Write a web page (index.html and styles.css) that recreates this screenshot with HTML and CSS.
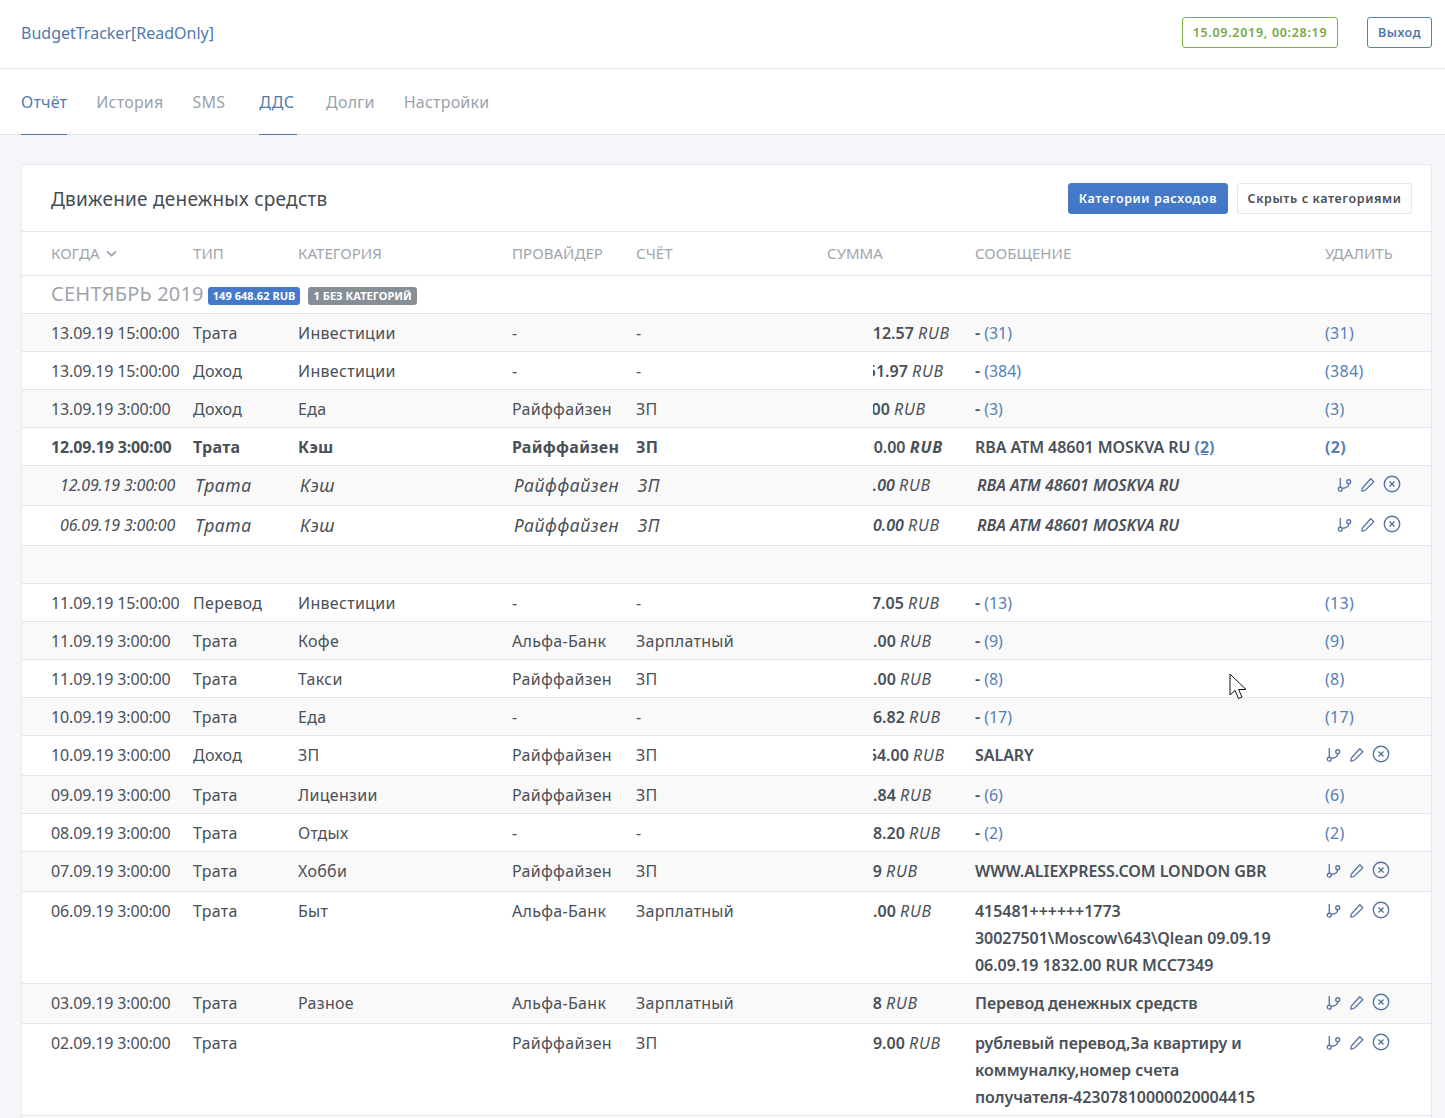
FILE: index.html
```html
<!DOCTYPE html>
<html lang="ru">
<head>
<meta charset="utf-8">
<title>BudgetTracker</title>
<link rel="stylesheet" href="styles.css">
</head>
<body>
<svg class="defs" width="0" height="0" aria-hidden="true">
  <symbol id="i-branch" viewBox="0 0 16 16"><circle cx="3.500" cy="13" r="2.100"/><circle cx="12.500" cy="5" r="2.100"/><path d="M3.500 10.900V1M12.500 7.100c0 3-3 4.500-7 5"/></symbol>
  <symbol id="i-pencil" viewBox="0 0 16 16"><path d="M11.500 1.800l3.200 3.200-8.700 8.700c-.4.4-3.200 1.200-4 1.200 0-.8.8-3.600 1.200-4z"/></symbol>
  <symbol id="i-x" viewBox="0 0 18 18"><circle cx="9" cy="9" r="7.700"/><path d="M6.500 6.500l5 5M11.500 6.500l-5 5"/></symbol>
</svg>
<header class="topbar">
  <a class="brand" href="#">BudgetTracker[ReadOnly]</a>
  <div class="topbar-right">
    <span class="clock">15.09.2019, 00:28:19</span>
    <a class="logout" href="#">Выход</a>
  </div>
</header>
<nav class="tabs">
  <a class="tab active" href="#">Отчёт</a>
  <a class="tab" href="#">История</a>
  <a class="tab" href="#">SMS</a>
  <a class="tab active wide" href="#">ДДС</a>
  <a class="tab" href="#">Долги</a>
  <a class="tab" href="#">Настройки</a>
</nav>
<main class="content">
  <section class="card">
    <div class="card-head">
      <h1 class="card-title">Движение денежных средств</h1>
      <div class="card-actions">
        <button class="btn primary">Категории расходов</button>
        <button class="btn plain">Скрыть с категориями</button>
      </div>
    </div>
    <table class="grid">
      <colgroup>
        <col class="c1"><col class="c2"><col class="c3"><col class="c4"><col class="c5"><col class="c6"><col class="c7"><col class="c8">
      </colgroup>
      <thead>
        <tr>
          <th>Когда <svg class="chev" viewBox="0 0 10 6" width="11" height="7"><path d="M1 1l4 4 4-4"/></svg></th>
          <th>Тип</th><th>Категория</th><th>Провайдер</th><th>Счёт</th><th>Сумма</th><th>Сообщение</th><th>Удалить</th>
        </tr>
      </thead>
      <tbody>
        <tr class="month"><td colspan="8"><div class="month-line"><span class="month-name">Сентябрь 2019</span><span class="pill blue">149 648.62 RUB</span><span class="pill gray">1 без категорий</span></div></td></tr>

        <tr class="odd"><td>13.09.19 15:00:00</td><td>Трата</td><td>Инвестиции</td><td>-</td><td>-</td><td><span class="amt" style="width:77px"><b>112.57</b>&nbsp;<i>RUB</i></span></td><td class="msg">- <a href="#">(31)</a></td><td><a href="#">(31)</a></td></tr>
        <tr><td>13.09.19 15:00:00</td><td>Доход</td><td>Инвестиции</td><td>-</td><td>-</td><td><span class="amt" style="width:71px"><b>551.97</b>&nbsp;<i>RUB</i></span></td><td class="msg">- <a href="#">(384)</a></td><td><a href="#">(384)</a></td></tr>
        <tr class="odd"><td>13.09.19 3:00:00</td><td>Доход</td><td>Еда</td><td>Райффайзен</td><td>ЗП</td><td><span class="amt" style="width:53px"><b>00.00</b>&nbsp;<i>RUB</i></span></td><td class="msg">- <a href="#">(3)</a></td><td><a href="#">(3)</a></td></tr>
        <tr class="bold"><td>12.09.19 3:00:00</td><td>Трата</td><td>Кэш</td><td>Райффайзен</td><td>ЗП</td><td><span class="amt" style="width:70px"><b>100.00</b>&nbsp;<i>RUB</i></span></td><td class="msg">RBA ATM 48601 MOSKVA RU <a class="u" href="#">(2)</a></td><td><a href="#">(2)</a></td></tr>
        <tr class="odd sub">
          <td><span class="s-date">12.09.19 3:00:00</span></td><td><span class="s-type">Трата</span></td><td><span class="s-cat">Кэш</span></td><td><span class="s-prov">Райффайзен</span></td><td><span class="s-acc">ЗП</span></td><td><span class="amt" style="width:58px"><b>0.00</b>&nbsp;<span>RUB</span></span></td><td class="msg"><span class="s-msg">RBA ATM 48601 MOSKVA RU</span></td>
          <td><span class="icons sub-icons"><svg class="ic"><use href="#i-branch"/></svg><svg class="ic"><use href="#i-pencil"/></svg><svg class="ic lg"><use href="#i-x"/></svg></span></td>
        </tr>
        <tr class="sub">
          <td><span class="s-date">06.09.19 3:00:00</span></td><td><span class="s-type">Трата</span></td><td><span class="s-cat">Кэш</span></td><td><span class="s-prov">Райффайзен</span></td><td><span class="s-acc">ЗП</span></td><td><span class="amt" style="width:67px"><b>100.00</b>&nbsp;<span>RUB</span></span></td><td class="msg"><span class="s-msg">RBA ATM 48601 MOSKVA RU</span></td>
          <td><span class="icons sub-icons"><svg class="ic"><use href="#i-branch"/></svg><svg class="ic"><use href="#i-pencil"/></svg><svg class="ic lg"><use href="#i-x"/></svg></span></td>
        </tr>
        <tr class="odd"><td colspan="8">&nbsp;</td></tr>
        <tr><td>11.09.19 15:00:00</td><td>Перевод</td><td>Инвестиции</td><td>-</td><td>-</td><td><span class="amt" style="width:67px"><b>157.05</b>&nbsp;<i>RUB</i></span></td><td class="msg">- <a href="#">(13)</a></td><td><a href="#">(13)</a></td></tr>
        <tr class="odd"><td>11.09.19 3:00:00</td><td>Трата</td><td>Кофе</td><td>Альфа-Банк</td><td>Зарплатный</td><td><span class="amt" style="width:59px"><b>0.00</b>&nbsp;<i>RUB</i></span></td><td class="msg">- <a href="#">(9)</a></td><td><a href="#">(9)</a></td></tr>
        <tr><td>11.09.19 3:00:00</td><td>Трата</td><td>Такси</td><td>Райффайзен</td><td>ЗП</td><td><span class="amt" style="width:59px"><b>0.00</b>&nbsp;<i>RUB</i></span></td><td class="msg">- <a href="#">(8)</a></td><td><a href="#">(8)</a></td></tr>
        <tr class="odd"><td>10.09.19 3:00:00</td><td>Трата</td><td>Еда</td><td>-</td><td>-</td><td><span class="amt" style="width:68px"><b>116.82</b>&nbsp;<i>RUB</i></span></td><td class="msg">- <a href="#">(17)</a></td><td><a href="#">(17)</a></td></tr>
        <tr class="tall"><td>10.09.19 3:00:00</td><td>Доход</td><td>ЗП</td><td>Райффайзен</td><td>ЗП</td><td><span class="amt" style="width:72px"><b>564.00</b>&nbsp;<i>RUB</i></span></td><td class="msg">SALARY</td>
          <td><span class="icons"><svg class="ic"><use href="#i-branch"/></svg><svg class="ic"><use href="#i-pencil"/></svg><svg class="ic lg"><use href="#i-x"/></svg></span></td></tr>
        <tr class="odd"><td>09.09.19 3:00:00</td><td>Трата</td><td>Лицензии</td><td>Райффайзен</td><td>ЗП</td><td><span class="amt" style="width:59px"><b>0.84</b>&nbsp;<i>RUB</i></span></td><td class="msg">- <a href="#">(6)</a></td><td><a href="#">(6)</a></td></tr>
        <tr><td>08.09.19 3:00:00</td><td>Трата</td><td>Отдых</td><td>-</td><td>-</td><td><span class="amt" style="width:68px"><b>118.20</b>&nbsp;<i>RUB</i></span></td><td class="msg">- <a href="#">(2)</a></td><td><a href="#">(2)</a></td></tr>
        <tr class="odd tall"><td>07.09.19 3:00:00</td><td>Трата</td><td>Хобби</td><td>Райффайзен</td><td>ЗП</td><td><span class="amt" style="width:45px"><b>99</b>&nbsp;<i>RUB</i></span></td><td class="msg">WWW.ALIEXPRESS.COM LONDON GBR</td>
          <td><span class="icons"><svg class="ic"><use href="#i-branch"/></svg><svg class="ic"><use href="#i-pencil"/></svg><svg class="ic lg"><use href="#i-x"/></svg></span></td></tr>
        <tr><td>06.09.19 3:00:00</td><td>Трата</td><td>Быт</td><td>Альфа-Банк</td><td>Зарплатный</td><td><span class="amt" style="width:59px"><b>0.00</b>&nbsp;<i>RUB</i></span></td><td class="msg">415481++++++1773<br>30027501\Moscow\643\Qlean 09.09.19<br>06.09.19 1832.00 RUR MCC7349</td>
          <td><span class="icons"><svg class="ic"><use href="#i-branch"/></svg><svg class="ic"><use href="#i-pencil"/></svg><svg class="ic lg"><use href="#i-x"/></svg></span></td></tr>
        <tr class="odd tall"><td>03.09.19 3:00:00</td><td>Трата</td><td>Разное</td><td>Альфа-Банк</td><td>Зарплатный</td><td><span class="amt" style="width:45px"><b>88</b>&nbsp;<i>RUB</i></span></td><td class="msg">Перевод денежных средств</td>
          <td><span class="icons"><svg class="ic"><use href="#i-branch"/></svg><svg class="ic"><use href="#i-pencil"/></svg><svg class="ic lg"><use href="#i-x"/></svg></span></td></tr>
        <tr><td>02.09.19 3:00:00</td><td>Трата</td><td></td><td>Райффайзен</td><td>ЗП</td><td><span class="amt" style="width:68px"><b>119.00</b>&nbsp;<i>RUB</i></span></td><td class="msg">рублевый перевод,За квартиру и<br>коммуналку,номер счета<br>получателя-42307810000020004415</td>
          <td><span class="icons"><svg class="ic"><use href="#i-branch"/></svg><svg class="ic"><use href="#i-pencil"/></svg><svg class="ic lg"><use href="#i-x"/></svg></span></td></tr>
        <tr class="odd"><td colspan="8">&nbsp;</td></tr>
      </tbody>
    </table>
  </section>
</main>
<svg class="cursor" width="19" height="28" viewBox="0 0 19 28" aria-hidden="true"><path d="M1 1v21l5-4.500 3.500 8 3.500-1.500-3.500-7.500H17z"/></svg>
</body>
</html>
```
FILE: styles.css
```css
html, body { margin: 0; padding: 0; height: 1118px; overflow: hidden; }
body { background: #f4f6f9; color: #495057; font-family: "Noto Sans", "Liberation Sans", sans-serif; font-size: 16px; position: relative; }
a { color: #5580b6; text-decoration: none; }
.defs { position: absolute; }

.topbar { height: 68px; background: #fff; border-bottom: 1px solid #e3e6ea; display: flex; align-items: center; justify-content: space-between; padding: 0 13px 0 21px; }
.brand { font-size: 16px; color: #4f79ad; position: relative; top: -1px; }
.topbar-right { display: flex; align-items: flex-start; gap: 29px; padding-bottom: 4px; }
.clock { width: 156px; height: 31px; box-sizing: border-box; border: 1px solid #78b13f; border-radius: 3px; color: #78a83f; font-size: 12.500px; font-weight: 600; display: flex; align-items: center; justify-content: center; letter-spacing: .7px; }
.logout { width: 65px; height: 31px; box-sizing: border-box; border: 1px solid #5a80ad; border-radius: 3px; color: #4f76a8; font-size: 12.500px; font-weight: 600; display: flex; align-items: center; justify-content: center; letter-spacing: .5px; }

.tabs { height: 65px; background: #fff; border-bottom: 1px solid #e3e6ea; display: flex; padding-left: 21px; gap: 29px; }
.tab { color: #9aa2ad; font-size: 16px; letter-spacing: .22px; line-height: 66px; height: 66px; box-sizing: border-box; }
.tab.active { color: #4f7bb3; border-bottom: 1px solid #4f7bb3; }
.tab.wide { padding-right: 3px; margin-left: 5px; }

.content { padding: 29px 13px 0 21px; }
.card { background: #fff; border: 1px solid #e6e9ed; border-bottom: 0; border-radius: 3px 3px 0 0; }
.card-head { height: 66px; display: flex; align-items: center; justify-content: space-between; padding: 0 19px 0 29px; border-bottom: 1px solid #e3e6ea; }
.card-title { margin: 0; font-size: 19px; font-weight: 400; letter-spacing: .25px; color: #454c53; position: relative; top: 1px; }
.card-actions { display: flex; gap: 9px; }
.btn { height: 31px; box-sizing: border-box; border-radius: 3px; font-family: inherit; font-size: 12.500px; font-weight: 600; letter-spacing: .6px; padding: 0; }
.btn.primary { width: 160px; background: #4479c9; border: 1px solid #4479c9; color: #fff; }
.btn.plain { width: 175px; background: #fff; border: 1px solid #e3e6ea; color: #4a5056; }

.grid { width: 100%; table-layout: fixed; border-collapse: collapse; }
.c1 { width: 171px; } .c2 { width: 105px; } .c3 { width: 214px; } .c4 { width: 124px; }
.c5 { width: 191px; } .c6 { width: 148px; } .c7 { width: 350px; } .c8 { width: 106px; }
.grid th { height: 41px; padding: 0 0 2px; text-align: left; font-size: 15px; font-weight: 400; letter-spacing: .05px; text-transform: uppercase; color: #a0a5ab; border-bottom: 1px solid #e3e6ea; }
.grid th:first-child, .grid td:first-child { padding-left: 29px; }
.chev { fill: none; stroke: #9aa0a6; stroke-width: 1.500; vertical-align: 2px; margin-left: 3px; }
.grid td { padding: 6px 0 4px; line-height: 27px; vertical-align: top; border-bottom: 1px solid #e3e6ea; white-space: nowrap; letter-spacing: .3px; }
.grid td:first-child { letter-spacing: -.15px; }
.grid td.msg { letter-spacing: -.05px; }
.odd td { background: #f9f9f9; }
.grid .month td { padding: 4px 0 5px 29px; letter-spacing: 0; }
.month-line { display: flex; align-items: center; height: 28px; }
.month-name { font-size: 20px; line-height: 28px; color: #a0a5ab; text-transform: uppercase; letter-spacing: .2px; margin-right: 4px; }
.pill { height: 18px; line-height: 18px; padding: 0 5px; margin-right: 8px; margin-top: 3px; border-radius: 3px; color: #fff; font-size: 11.100px; font-weight: 700; text-transform: uppercase; }
.pill.blue { background: #4479c9; }
.pill.gray { background: #868e96; }

.amt { display: flex; justify-content: flex-end; overflow: hidden; white-space: nowrap; margin-left: 46px; letter-spacing: 0; }
.amt b { font-weight: 600; flex: none; }
.amt i, .amt span { flex: none; letter-spacing: .8px; }
.msg { font-weight: 600; }
.msg a { font-weight: 400; }
.bold td { font-weight: 700; }
.bold .msg { font-weight: 600; }
.bold .msg a, .bold a { font-weight: 700; }
.bold .amt i { font-weight: 700; }
.u { text-decoration: underline; }
.tall td { padding-bottom: 6px; }

.sub td { padding: 6px 0 5px; font-style: italic; }
.s-date { padding-left: 9px; }
.s-type, .s-prov, .s-cat, .s-acc { font-size: 17.600px; letter-spacing: .55px; line-height: 27px; }
.s-type, .s-cat, .s-prov, .s-acc, .s-msg { padding-left: 2px; }
.s-msg { font-weight: 600; }

.icons { display: flex; align-items: center; gap: 8px; height: 27px; margin-top: -1px; padding-left: 1px; }
.sub-icons { padding-left: 12px; }
.ic { width: 15px; height: 15px; fill: none; stroke: #56759f; stroke-width: 1.400; }
.ic.lg { width: 18px; height: 18px; margin-top: -1px; }

.cursor { position: absolute; left: 1229px; top: 673px; fill: #fff; stroke: #111; stroke-width: 1; }
```
